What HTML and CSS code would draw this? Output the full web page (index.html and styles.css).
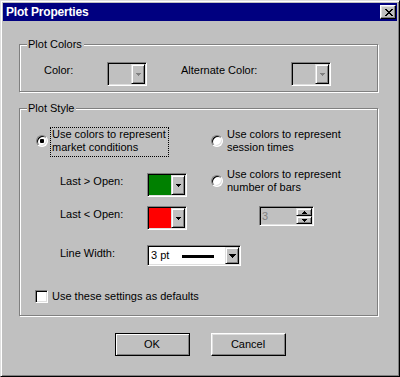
FILE: index.html
```html
<!DOCTYPE html>
<html>
<head>
<meta charset="utf-8">
<title>Plot Properties</title>
<link rel="stylesheet" href="styles.css">
</head>
<body>
<div class="window">
  <div class="titlebar">
    <span class="title">Plot Properties</span>
    <span class="close"><svg width="8" height="7" viewBox="0 0 8 7" shape-rendering="crispEdges"><path d="M0 0h2v1H0zM6 0h2v1H6zM1 1h2v1H1zM5 1h2v1H5zM2 2h4v1H2zM3 3h2v1H3zM2 4h4v1H2zM1 5h2v1H1zM5 5h2v1H5zM0 6h2v1H0zM6 6h2v1H6z" fill="#000"/></svg></span>
  </div>
  <div class="content">
    <div class="group group-colors">
      <span class="legend">Plot Colors</span>
      <div class="color-row">
        <span class="lbl lbl-color">Color:</span>
        <div class="combo combo-color">
          <span class="field field-disabled"></span>
          <span class="dd"><svg width="5" height="3" viewBox="0 0 5 3" shape-rendering="crispEdges"><path d="M0 0h5v1h-1v1h-1v1h-1v-1h-1v-1h-1z" fill="#808080"/></svg></span>
        </div>
        <span class="lbl lbl-alt">Alternate Color:</span>
        <div class="combo combo-color">
          <span class="field field-disabled"></span>
          <span class="dd"><svg width="5" height="3" viewBox="0 0 5 3" shape-rendering="crispEdges"><path d="M0 0h5v1h-1v1h-1v1h-1v-1h-1v-1h-1z" fill="#808080"/></svg></span>
        </div>
      </div>
    </div>

    <div class="group group-style">
      <span class="legend">Plot Style</span>
      <div class="style-cols">
        <div class="col-left">
          <div class="radio-item">
            <span class="radio"><span class="dot"></span></span>
            <span class="radio-label focus">Use colors to represent<br>market conditions</span>
          </div>
          <div class="field-row row-gt">
            <span class="lbl lbl-field">Last &gt; Open:</span>
            <div class="combo combo-color">
              <span class="field field-green"></span>
              <span class="dd"><svg width="5" height="3" viewBox="0 0 5 3" shape-rendering="crispEdges"><path d="M0 0h5v1h-1v1h-1v1h-1v-1h-1v-1h-1z" fill="#000"/></svg></span>
            </div>
          </div>
          <div class="field-row row-lt">
            <span class="lbl lbl-field">Last &lt; Open:</span>
            <div class="combo combo-color">
              <span class="field field-red"></span>
              <span class="dd"><svg width="5" height="3" viewBox="0 0 5 3" shape-rendering="crispEdges"><path d="M0 0h5v1h-1v1h-1v1h-1v-1h-1v-1h-1z" fill="#000"/></svg></span>
            </div>
          </div>
          <div class="field-row row-lw">
            <span class="lbl lbl-field">Line Width:</span>
            <div class="combo combo-lw">
              <span class="field field-white"><span class="lw-text">3 pt</span><span class="lw-line"></span></span>
              <span class="dd"><svg width="7" height="4" viewBox="0 0 7 4" shape-rendering="crispEdges"><path d="M0 0h7v1h-1v1h-1v1h-1v1h-1v-1h-1v-1h-1v-1h-1z" fill="#000"/></svg></span>
            </div>
          </div>
        </div>
        <div class="col-right">
          <div class="radio-item">
            <span class="radio"></span>
            <span class="radio-label">Use colors to represent<br>session times</span>
          </div>
          <div class="radio-item radio-bars">
            <span class="radio"></span>
            <span class="radio-label">Use colors to represent<br>number of bars</span>
          </div>
          <div class="spin">
            <span class="spin-field">3</span>
            <span class="spin-btns">
              <span class="spin-btn"><svg width="5" height="3" viewBox="0 0 5 3" shape-rendering="crispEdges"><path d="M2 0h1v1h1v1h1v1h-5v-1h1v-1h1z" fill="#000"/></svg></span>
              <span class="spin-btn"><svg width="5" height="3" viewBox="0 0 5 3" shape-rendering="crispEdges"><path d="M0 0h5v1h-1v1h-1v1h-1v-1h-1v-1h-1z" fill="#000"/></svg></span>
            </span>
          </div>
        </div>
      </div>
      <div class="check-row">
        <span class="checkbox"></span>
        <span class="check-label">Use these settings as defaults</span>
      </div>
    </div>

    <div class="buttons">
      <span class="btn btn-default">OK</span>
      <span class="btn">Cancel</span>
    </div>
  </div>
</div>
</body>
</html>
```

FILE: styles.css
```css
html, body {
  margin: 0;
  padding: 0;
  background: #c0c0c0;
}

body {
  font-family: "Liberation Sans", Arial, sans-serif;
  font-size: 11px;
  line-height: 13px;
  color: #000;
}

.window {
  width: 400px;
  height: 377px;
  box-sizing: border-box;
  border: 1px solid;
  border-color: #dfdfdf #000 #000 #dfdfdf;
  box-shadow: inset 1px 1px 0 #fff, inset -1px -1px 0 #808080;
  padding: 2px;
  background: #c0c0c0;
  display: flex;
  flex-direction: column;
}

.titlebar {
  height: 18px;
  flex: none;
  background: #000080;
  color: #fff;
  display: flex;
  align-items: center;
  justify-content: space-between;
  padding: 0 1px 0 3px;
}

.title {
  font-weight: bold;
  font-size: 12px;
  letter-spacing: -0.2px;
}

.close {
  width: 16px;
  height: 14px;
  box-sizing: border-box;
  background: #c0c0c0;
  border: 1px solid;
  border-color: #fff #000 #000 #fff;
  box-shadow: inset -1px -1px 0 #808080, inset 1px 1px 0 #dfdfdf;
  display: flex;
  align-items: center;
  justify-content: center;
  padding: 0 0 0 1px;
}

.close svg {
  display: block;
}

.content {
  flex: 1;
  display: flex;
  flex-direction: column;
}

.group {
  box-sizing: border-box;
  width: 359px;
  margin-left: 16px;
  border: 1px solid #808080;
  box-shadow: inset 1px 1px 0 #fff, 1px 1px 0 #fff;
  display: flex;
  flex-direction: column;
}

.group-colors {
  margin-top: 23px;
  height: 48px;
}

.group-style {
  margin-top: 16px;
  height: 208px;
}

.legend {
  align-self: flex-start;
  margin: -7px 0 0 7px;
  padding: 0 2px 0 1px;
  background: #c0c0c0;
  line-height: 13px;
}

.color-row {
  display: flex;
  align-items: flex-start;
  margin-top: 11px;
  padding-left: 24px;
}

.lbl {
  flex: none;
  margin-top: 2px;
  white-space: nowrap;
}

.lbl-color {
  width: 63px;
}

.lbl-alt {
  margin-left: 34px;
  width: 110px;
}

.combo {
  box-sizing: border-box;
  display: flex;
  flex: none;
  border: 1px solid;
  border-color: #808080 #fff #fff #808080;
  box-shadow: inset 1px 1px 0 #000, inset -1px -1px 0 #dfdfdf;
  padding: 1px;
}

.combo-color {
  width: 40px;
  height: 24px;
}

.combo-lw {
  width: 94px;
  height: 21px;
}

.field {
  flex: 1;
  display: flex;
  align-items: center;
}

.field-disabled { background: #c0c0c0; }
.field-green { background: #008000; }
.field-red { background: #ff0000; }
.field-white { background: #fff; padding-left: 2px; }

.lw-text {
  white-space: nowrap;
}

.lw-line {
  width: 32px;
  height: 3px;
  background: #000;
  margin-left: 13px;
  margin-top: 1px;
}

.dd {
  width: 14px;
  flex: none;
  box-sizing: border-box;
  background: #c0c0c0;
  border: 1px solid;
  border-color: #dfdfdf #000 #000 #dfdfdf;
  box-shadow: inset 1px 1px 0 #fff, inset -1px -1px 0 #808080;
  display: flex;
  align-items: center;
  justify-content: center;
}

.dd svg, .spin-btn svg {
  display: block;
}

.style-cols {
  display: flex;
  margin-top: 12px;
  padding-left: 16px;
}

.col-left {
  width: 175px;
  flex: none;
  display: flex;
  flex-direction: column;
}

.col-right {
  display: flex;
  flex-direction: column;
}

.radio-item {
  display: flex;
  align-items: flex-start;
  gap: 2px;
}

.radio-bars {
  margin-top: 10px;
}

.radio {
  width: 12px;
  height: 12px;
  box-sizing: border-box;
  flex: none;
  margin-top: 8px;
  border-radius: 50%;
  border: 1px solid;
  border-color: #808080 #fff #fff #808080;
  background: #fff;
  box-shadow: inset 1px 1px 0 #000, inset -1px -1px 0 #dfdfdf;
  display: flex;
  align-items: center;
  justify-content: center;
}

.dot {
  width: 4px;
  height: 4px;
  border-radius: 1px;
  background: #000;
}

.radio-label {
  border: 1px dotted transparent;
  padding: 0 2px 2px 1px;
  line-height: 13px;
  white-space: nowrap;
}

.radio-label.focus {
  border-color: #000;
}

.field-row {
  display: flex;
  align-items: flex-start;
  padding-left: 24px;
}

.lbl-field {
  width: 87px;
}

.row-gt { margin-top: 16px; }
.row-lt { margin-top: 9px; }
.row-lw { margin-top: 15px; }

.spin {
  box-sizing: border-box;
  width: 55px;
  height: 20px;
  margin: 9px 0 0 48px;
  display: flex;
  border: 1px solid;
  border-color: #808080 #fff #fff #808080;
  box-shadow: inset 1px 1px 0 #000, inset -1px -1px 0 #dfdfdf;
  padding: 1px;
  background: #c0c0c0;
}

.spin-field {
  flex: 1;
  color: #808080;
  padding-left: 1px;
  line-height: 16px;
}

.spin-btns {
  width: 16px;
  display: flex;
  flex-direction: column;
}

.spin-btn {
  flex: 1;
  box-sizing: border-box;
  background: #c0c0c0;
  border: 1px solid;
  border-color: #dfdfdf #000 #000 #dfdfdf;
  box-shadow: inset 1px 1px 0 #fff, inset -1px -1px 0 #808080;
  display: flex;
  align-items: center;
  justify-content: center;
}

.check-row {
  display: flex;
  align-items: center;
  gap: 4px;
  margin: 24px 0 0 15px;
}

.checkbox {
  width: 13px;
  height: 13px;
  box-sizing: border-box;
  flex: none;
  border: 1px solid;
  border-color: #808080 #fff #fff #808080;
  box-shadow: inset 1px 1px 0 #000, inset -1px -1px 0 #dfdfdf;
  background: #fff;
}

.check-label {
  white-space: nowrap;
}

.buttons {
  display: flex;
  justify-content: center;
  gap: 21px;
  margin-top: 17px;
}

.btn {
  width: 75px;
  height: 23px;
  box-sizing: border-box;
  display: flex;
  align-items: center;
  justify-content: center;
  background: #c0c0c0;
  border: 1px solid;
  border-color: #fff #000 #000 #fff;
  box-shadow: inset -1px -1px 0 #808080, inset 1px 1px 0 #dfdfdf;
}

.btn-default {
  border-color: #000;
  box-shadow: inset 1px 1px 0 #fff, inset -1px -1px 0 #808080;
}
```
